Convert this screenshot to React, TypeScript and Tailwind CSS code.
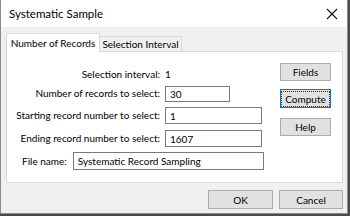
const font = { fontFamily: 'Lato, "Noto Sans", sans-serif' };

function Btn({ label, focused = false, className = "" }: { label: string; focused?: boolean; className?: string }) {
  return (
    <div
      className={`flex items-center justify-center bg-[#e1e1e1] text-[10px] leading-none text-black whitespace-nowrap border ${
        focused ? "border-[#0078d7]" : "border-[#adadad]"
      } ${className}`}
    >
      {focused ? (
        <span className="border border-dotted border-[#333] px-[3px] py-[2px]">{label}</span>
      ) : (
        label
      )}
    </div>
  );
}

function Field({ value, className = "" }: { value: string; className?: string }) {
  return (
    <div className={`flex items-center bg-white border border-[#7a7a7a] pl-[4px] text-[10px] leading-none whitespace-nowrap ${className}`}>
      {value}
    </div>
  );
}

export default function App() {
  return (
    <div className="w-[350px] h-[216px] bg-[#4a4a4a] overflow-hidden" style={font}>
      <div className="w-[348px] h-[214px] border border-[#8c8c8c] border-t-0 bg-[#f0f0f0] flex flex-col">
        {/* title bar */}
        <div className="h-[27px] bg-white flex items-center justify-between pl-[8px] pr-[6px]">
          <span className="text-[11.5px] text-black whitespace-nowrap">Systematic Sample</span>
          <svg width="12" height="12" viewBox="0 0 12 12" className="mr-[3px]">
            <path d="M1 1 L11 11 M11 1 L1 11" stroke="#111" strokeWidth="1.1" />
          </svg>
        </div>

        <div className="pl-[5px] pr-[4px] pt-[6px]">
          {/* tabs */}
          <div className="flex items-end h-[18px] text-[10px] text-black whitespace-nowrap">
            <div className="relative z-10 w-[94px] h-[19px] -mb-px bg-white border border-b-0 border-[#d9d9d9] flex items-center justify-center">
              Number of Records
            </div>
            <div className="h-[15px] w-[82px] bg-[#f0f0f0] border border-l-0 border-b-0 border-[#d9d9d9] flex items-center justify-center">
              Selection Interval
            </div>
          </div>

          {/* panel */}
          <div className="h-[132px] bg-white border border-[#d9d9d9] flex text-[10px] text-black whitespace-nowrap">
            <div className="w-[272px] flex flex-col">
              <div className="mt-[14px] h-[17px] flex items-center">
                <span className="w-[153px] text-right">Selection interval:</span>
                <span className="ml-[5px]">1</span>
              </div>
              <div className="mt-[2px] h-[17px] flex items-center">
                <span className="w-[153px] text-right">Number of records to select:</span>
                <Field value="30" className="ml-[5px] w-[65px] h-[16px]" />
              </div>
              <div className="mt-[5px] h-[17px] flex items-center">
                <span className="w-[153px] text-right">Starting record number to select:</span>
                <Field value="1" className="ml-[5px] w-[97px] h-[17px]" />
              </div>
              <div className="mt-[6px] h-[17px] flex items-center">
                <span className="w-[153px] text-right">Ending record number to select:</span>
                <Field value="1607" className="ml-[5px] w-[97px] h-[17px]" />
              </div>
              <div className="mt-[5px] h-[18px] flex items-center">
                <span className="ml-[15px]">File name:</span>
                <Field value="Systematic Record Sampling" className="ml-[6px] w-[191px] h-[18px]" />
              </div>
            </div>
            <div className="ml-[1px] flex flex-col">
              <Btn label="Fields" className="mt-[11px] w-[51px] h-[18px]" />
              <Btn label="Compute" focused className="mt-[8px] w-[51px] h-[19px]" />
              <Btn label="Help" className="mt-[10px] w-[51px] h-[18px]" />
            </div>
          </div>

          {/* bottom buttons */}
          <div className="mt-[7px] flex justify-end gap-[6px]">
            <Btn label="OK" className="w-[65px] h-[19px]" />
            <Btn label="Cancel" className="w-[64px] h-[19px]" />
          </div>
        </div>
      </div>
    </div>
  );
}
